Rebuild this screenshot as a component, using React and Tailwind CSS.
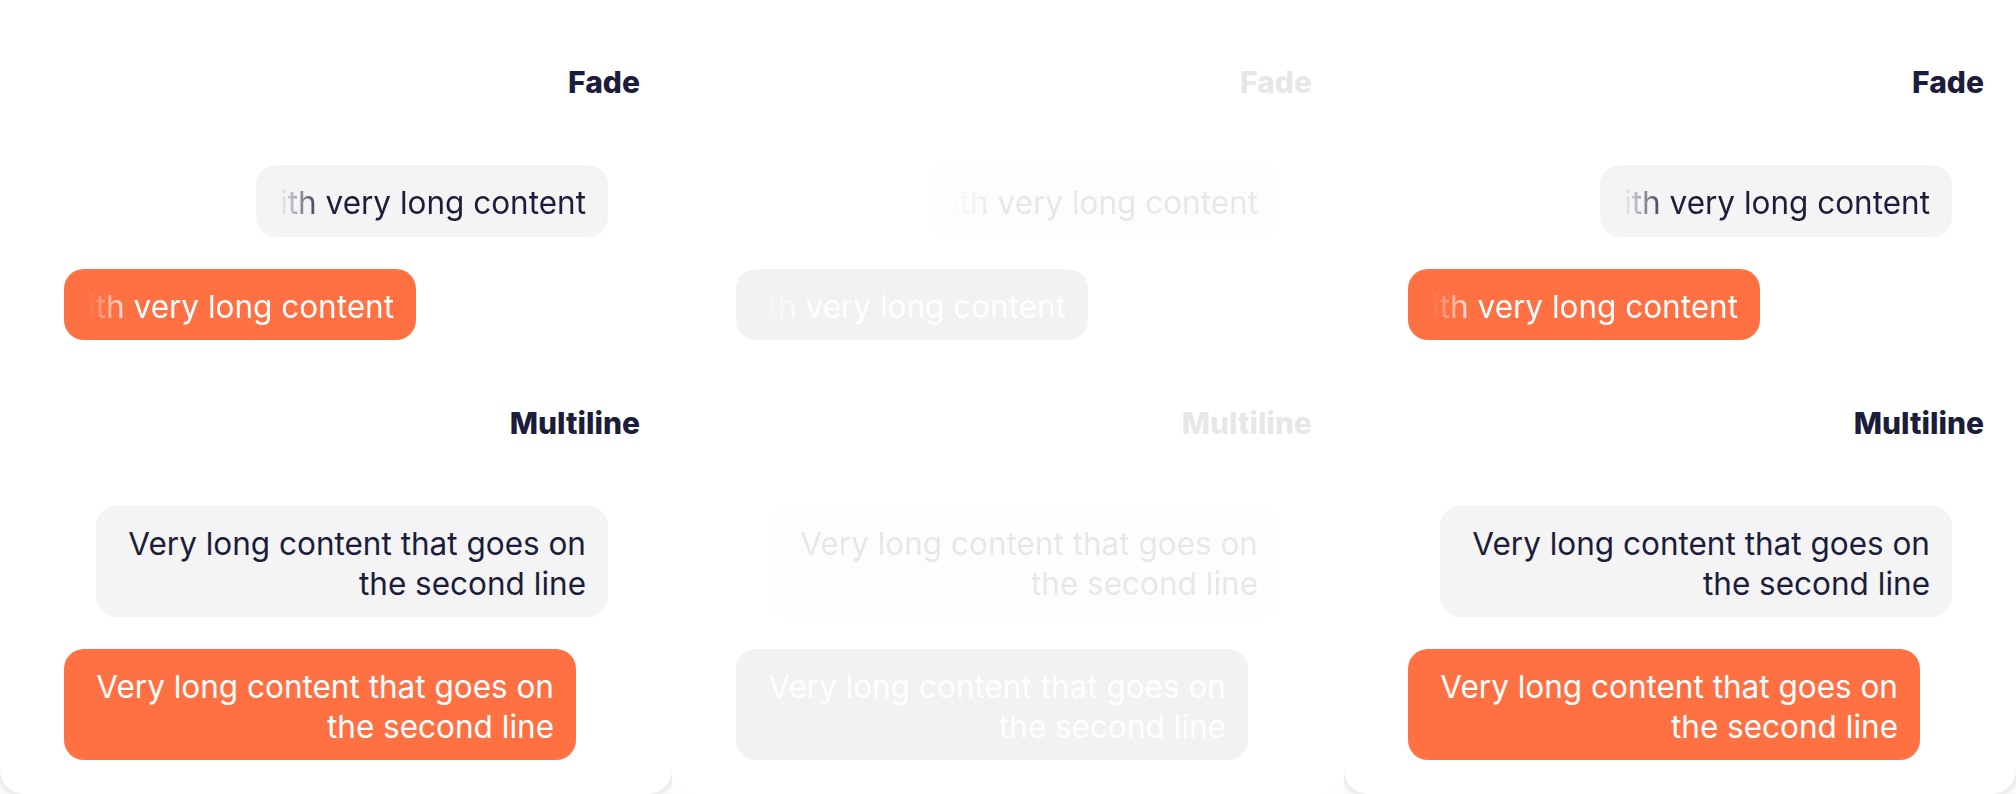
import React from "react";

function SingleBubble({ orange }) {
  const base = orange
    ? "bg-[#ff7043] text-white"
    : "bg-[#f4f4f5] text-[#1c1d3a]";
  return (
    <div className={`w-[352px] rounded-[20px] pl-6 pr-[22px] pt-[18px] pb-[14px] text-[31.5px] leading-[39.5px] ${base}`}>
      <div className="flex justify-end overflow-hidden whitespace-nowrap [mask-image:linear-gradient(to_right,transparent_0px,black_44px)] [-webkit-mask-image:linear-gradient(to_right,transparent_0px,black_44px)]">
        <span className="shrink-0">Bubble with very long content</span>
      </div>
    </div>
  );
}

function MultiBubble({ orange }) {
  const base = orange
    ? "bg-[#ff7043] text-white"
    : "bg-[#f4f4f5] text-[#1c1d3a]";
  return (
    <div className={`w-[512px] rounded-[20px] pl-6 pr-[22px] pt-[18px] pb-[14px] text-[31.5px] leading-[39.5px] text-right ${base}`}>
      Very long content that goes on
      <br />
      the second line
    </div>
  );
}

function Section({ title, children }) {
  return (
    <div className="flex flex-col">
      <div className="text-right text-[30px] leading-[38px] font-extrabold text-[#1c1d3a]">{title}</div>
      <div className="mt-16 flex flex-col gap-8">{children}</div>
    </div>
  );
}

function Card({ faded }) {
  return (
    <div className={faded ? "w-[672px] h-[794px] shrink-0 overflow-hidden grayscale opacity-10" : "w-[672px] h-[794px] shrink-0 overflow-hidden"}>
      <div className="h-full bg-white rounded-b-3xl shadow-[0_0_14px_rgba(0,0,0,0.2)] px-8 pt-[63px] pb-8 flex flex-col gap-16">
        <Section title="Fade">
          <div className="flex justify-end pr-8">
            <SingleBubble />
          </div>
          <div className="flex justify-start pl-8">
            <SingleBubble orange />
          </div>
        </Section>
        <Section title="Multiline">
          <div className="flex justify-end pr-8">
            <MultiBubble />
          </div>
          <div className="flex justify-start pl-8">
            <MultiBubble orange />
          </div>
        </Section>
      </div>
    </div>
  );
}

export default function App() {
  return (
    <div className="w-[2016px] h-[794px] bg-white flex overflow-hidden font-[Inter,sans-serif]">
      <Card />
      <Card faded />
      <Card />
    </div>
  );
}
